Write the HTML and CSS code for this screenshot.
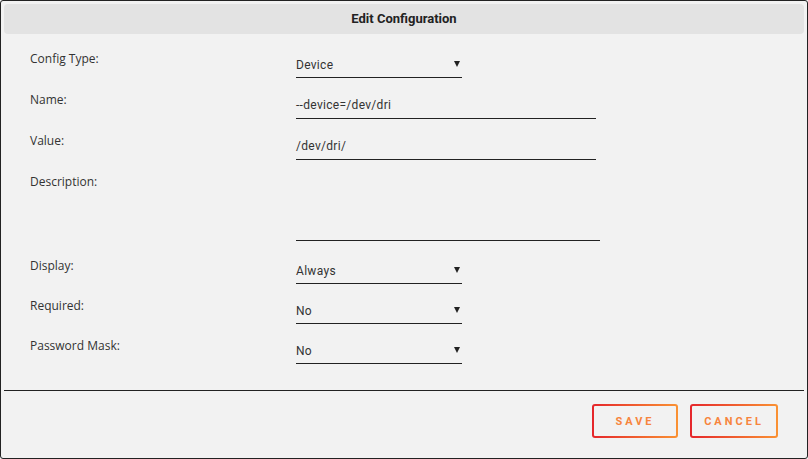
FILE: index.html
```html
<!DOCTYPE html>
<html lang="en">
<head>
    <meta charset="UTF-8">
    <title>Edit Configuration</title>
    <link rel="stylesheet" href="styles.css">
</head>
<body>
    <div class="dialog">
        <div class="dialog-header">Edit Configuration</div>

        <form class="config-form">
            <div class="row">
                <label>Config Type:</label>
                <div class="field select">Device <span class="arrow"></span></div>
            </div>
            <div class="row">
                <label>Name:</label>
                <div class="field text">--device=/dev/dri</div>
            </div>
            <div class="row">
                <label>Value:</label>
                <div class="field text">/dev/dri/</div>
            </div>
            <div class="row row-tall">
                <label>Description:</label>
                <div class="field area"></div>
            </div>
            <div class="row row-short">
                <label>Display:</label>
                <div class="field select">Always <span class="arrow"></span></div>
            </div>
            <div class="row row-short">
                <label>Required:</label>
                <div class="field select">No <span class="arrow"></span></div>
            </div>
            <div class="row row-short">
                <label>Password Mask:</label>
                <div class="field select">No <span class="arrow"></span></div>
            </div>
        </form>

        <div class="divider"></div>

        <div class="actions">
            <button class="btn">SAVE</button>
            <button class="btn">CANCEL</button>
        </div>
    </div>
</body>
</html>
```

FILE: styles.css
```css
body {
    margin: 0;
    padding: 0;
    background: #f2f2f2;
}

.dialog {
    width: 808px;
    height: 459px;
    box-sizing: border-box;
    border: 1px solid #222;
    border-radius: 3px;
    background: #f2f2f2;
    display: flex;
    flex-direction: column;
}

.dialog-header {
    margin: 3px 3px 0 3px;
    height: 30px;
    line-height: 30px;
    background: #e3e3e3;
    border-radius: 4px;
    text-align: center;
    font-family: Roboto, sans-serif;
    font-weight: bold;
    font-size: 13px;
    color: #222;
}

/* Formulário */
.config-form {
    padding: 17px 0 0 29px;
}

.row {
    display: grid;
    grid-template-columns: 266px auto;
    align-items: start;
    height: 41px;
}

.row-tall {
    height: 84px;
}

.row-short {
    height: 40px;
}

label {
    font-family: "Open Sans", sans-serif;
    font-size: 12px;
    line-height: 16px;
    color: #333;
}

.field {
    margin-top: 2px;
    height: 24px;
    line-height: 22px;
    border-bottom: 1px solid #222;
    font-family: Roboto, sans-serif;
    font-size: 12px;
    letter-spacing: 0.3px;
    font-variant-ligatures: none;
    color: #333;
}

.select {
    width: 166px;
    display: flex;
    justify-content: space-between;
    align-items: center;
    padding-right: 2px;
    box-sizing: border-box;
    height: 25px;
}

.row-short .select {
    margin-top: 1px;
}

.arrow {
    width: 0;
    height: 0;
    border-left: 3px solid transparent;
    border-right: 3px solid transparent;
    border-top: 6px solid #222;
    margin-top: -3px;
}

.text {
    width: 300px;
}

.area {
    width: 304px;
    height: 64px;
}

.divider {
    margin: 12px 3px 0 3px;
    border-top: 1px solid #222;
}

/* Botões */
.actions {
    display: flex;
    justify-content: flex-end;
    gap: 12px;
    padding: 13px 29px 0 0;
}

.btn {
    height: 34px;
    padding: 0;
    border: 2px solid transparent;
    border-radius: 3px;
    background:
        linear-gradient(#f2f2f2, #f2f2f2) padding-box,
        linear-gradient(90deg, #e5262b, #fa9233) border-box;
    font-family: Roboto, sans-serif;
    font-weight: bold;
    font-size: 11px;
    letter-spacing: 3px;
    color: #f7853d;
    cursor: pointer;
}

.btn:first-child {
    width: 86px;
}

.btn:last-child {
    width: 88px;
}
```
